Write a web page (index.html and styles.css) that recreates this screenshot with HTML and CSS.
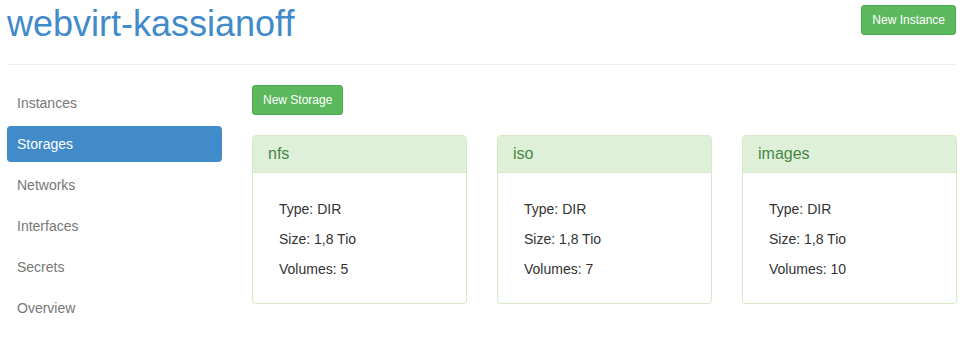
FILE: index.html
```html
<!DOCTYPE html>
<html lang="en">
<head>
    <meta charset="UTF-8">
    <title>webvirt-kassianoff</title>
    <link rel="stylesheet" href="styles.css">
</head>
<body>
<div class="page">
    <div class="header">
        <h1 class="brand">webvirt-kassianoff</h1>
        <a class="btn btn-new-instance">New Instance</a>
    </div>
    <hr class="divider">
    <div class="layout">
        <ul class="nav">
            <li><a>Instances</a></li>
            <li class="active"><a>Storages</a></li>
            <li><a>Networks</a></li>
            <li><a>Interfaces</a></li>
            <li><a>Secrets</a></li>
            <li><a>Overview</a></li>
        </ul>
        <div class="main">
            <a class="btn">New Storage</a>
            <div class="cards">
                <div class="card">
                    <div class="card-head">nfs</div>
                    <div class="card-body">
                        <p>Type: DIR</p>
                        <p>Size: 1,8 Tio</p>
                        <p>Volumes: 5</p>
                    </div>
                </div>
                <div class="card">
                    <div class="card-head">iso</div>
                    <div class="card-body">
                        <p>Type: DIR</p>
                        <p>Size: 1,8 Tio</p>
                        <p>Volumes: 7</p>
                    </div>
                </div>
                <div class="card">
                    <div class="card-head">images</div>
                    <div class="card-body">
                        <p>Type: DIR</p>
                        <p>Size: 1,8 Tio</p>
                        <p>Volumes: 10</p>
                    </div>
                </div>
            </div>
        </div>
    </div>
</div>
</body>
</html>
```
FILE: styles.css
```css
*{box-sizing:border-box;}
body{margin:0;background:#fff;font-family:"Liberation Sans",Arial,sans-serif;font-size:14px;color:#333;}
.page{padding:0 9px 0 7px;}
.header{display:flex;justify-content:space-between;align-items:flex-start;}
.brand{margin:4px 0 0;font-size:36px;line-height:40px;font-weight:normal;color:#428bca;}
.btn{display:inline-block;padding:5px 10px;font-size:12px;line-height:18px;color:#fff;background:#5cb85c;border:1px solid #4cae4c;border-radius:3px;cursor:pointer;}
.btn-new-instance{margin:5px 1px 0 0;}
.divider{margin:20px 0 20px;border:0;border-top:1px solid #eee;height:0;}
.layout{display:flex;gap:30px;align-items:flex-start;}
.nav{list-style:none;margin:0;padding:0;width:215px;flex-shrink:0;display:flex;flex-direction:column;gap:5px;}
.nav a{display:block;padding:8px 10px;line-height:20px;color:#777;border-radius:4px;}
.nav .active a{background:#428bca;color:#fff;}
.main{flex:1;}
.cards{display:flex;gap:30px;margin-top:20px;}
.card{width:215px;flex-shrink:0;border:1px solid #d6e9c6;border-radius:4px;background:#fff;}
.card-head{padding:8px 15px;font-size:16px;line-height:20px;color:#468847;background:#dff0d8;border-bottom:1px solid #d6e9c6;border-radius:3px 3px 0 0;}
.card-body{padding:26px 15px 24px 26px;}
.card-body p{margin:0 0 10px;line-height:20px;}
.card-body p:last-child{margin-bottom:0;}
```
